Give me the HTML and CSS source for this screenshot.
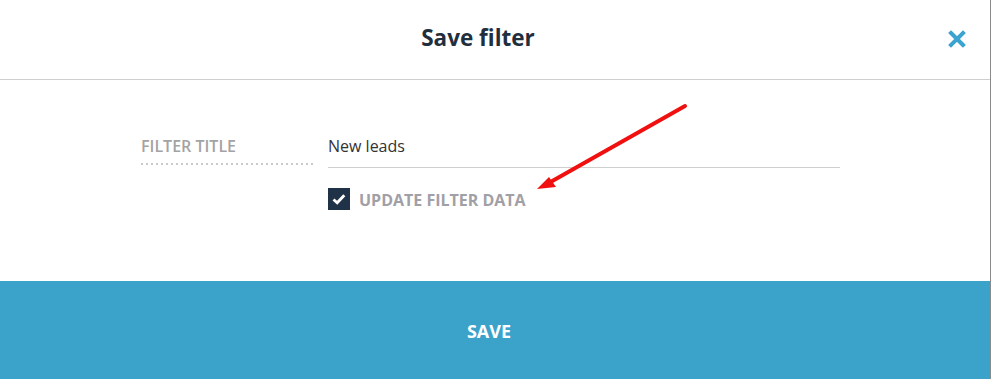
FILE: index.html
```html
<!DOCTYPE html>
<html lang="en">
<head>
  <meta charset="UTF-8">
  <meta name="viewport" content="width=device-width, initial-scale=1">
  <title>Save filter</title>
  <link rel="stylesheet" href="styles.css">
</head>
<body>
  <div class="modal">
    <div class="modal-header">
      <h1>Save filter</h1>
      <button class="close" aria-label="Close">
        <svg width="18" height="18" viewBox="0 0 18 18">
          <path d="M3 3 L15 15 M15 3 L3 15" stroke="#3ba3cf" stroke-width="4" stroke-linecap="square" fill="none"/>
        </svg>
      </button>
    </div>

    <div class="modal-body">
      <div class="form-row">
        <label class="field-label" for="filterTitle">Filter title</label>
        <div class="field">
          <input type="text" id="filterTitle" value="New leads">
          <label class="check-row">
            <span class="checkbox">
              <svg width="14" height="12" viewBox="0 0 14 12">
                <path d="M1.5 6.5 L5.2 9.8 L12.3 2.2" stroke="#fff" stroke-width="2.8" fill="none"/>
              </svg>
            </span>
            <span class="check-text">Update filter data</span>
          </label>
        </div>
      </div>
    </div>

    <button class="save">Save</button>

    <svg class="arrow" width="160" height="100" viewBox="0 0 160 100">
      <line x1="154" y1="6" x2="16" y2="84" stroke="#f01010" stroke-width="4" stroke-linecap="round"/>
      <polygon points="6,89 18,77 25,87" fill="#f01010"/>
    </svg>
  </div>
</body>
</html>
```

FILE: styles.css
```css
body {
  margin: 0;
  font-family: "Open Sans", Arial, sans-serif;
  background: #fff;
}

.modal {
  position: relative;
  height: 379px;
  display: flex;
  flex-direction: column;
  border-right: 1px solid #8a8a8a;
}

.modal-header {
  height: 80px;
  box-sizing: border-box;
  padding: 0 34px 5px 0;
  border-bottom: 1px solid #cfcfcf;
  display: flex;
  align-items: center;
  justify-content: center;
  position: relative;
}

.modal-header h1 {
  margin: 0;
  font-size: 22.5px;
  font-weight: 700;
  color: #1f2f40;
}

.close {
  position: absolute;
  right: 24px;
  top: 30px;
  border: none;
  background: none;
  padding: 0;
  cursor: pointer;
  display: flex;
}

.modal-body {
  flex: 1;
  padding: 54px 0 0 141px;
}

.form-row {
  display: flex;
  gap: 15px;
}

.field-label {
  width: 172px;
  height: 31px;
  font-size: 16px;
  line-height: 24px;
  font-weight: 600;
  color: #a3a3a3;
  text-transform: uppercase;
  background: linear-gradient(to right, #cacaca 40%, transparent 0) repeat-x left bottom / 5px 2px;
}

.field {
  width: 512px;
}

.field input {
  display: block;
  width: 100%;
  box-sizing: border-box;
  border: none;
  border-bottom: 1px solid #cfcfcf;
  padding: 0 0 9px 0;
  font-family: inherit;
  font-size: 16px;
  line-height: 24px;
  color: #333;
  outline: none;
}

.check-row {
  display: flex;
  align-items: center;
  gap: 9px;
  margin-top: 19px;
}

.checkbox {
  width: 22px;
  height: 22px;
  background: #1f3247;
  display: flex;
  align-items: center;
  justify-content: center;
}

.check-text {
  font-size: 16px;
  font-weight: 700;
  color: #a0a0a6;
  text-transform: uppercase;
  padding-top: 2px;
}

.save {
  height: 98px;
  border: none;
  padding: 2px 12px 0 0;
  background: #3ba2ca;
  color: #fff;
  font-family: inherit;
  font-size: 18px;
  font-weight: 700;
  text-transform: uppercase;
  cursor: pointer;
}

.arrow {
  position: absolute;
  left: 531px;
  top: 100px;
}
```
